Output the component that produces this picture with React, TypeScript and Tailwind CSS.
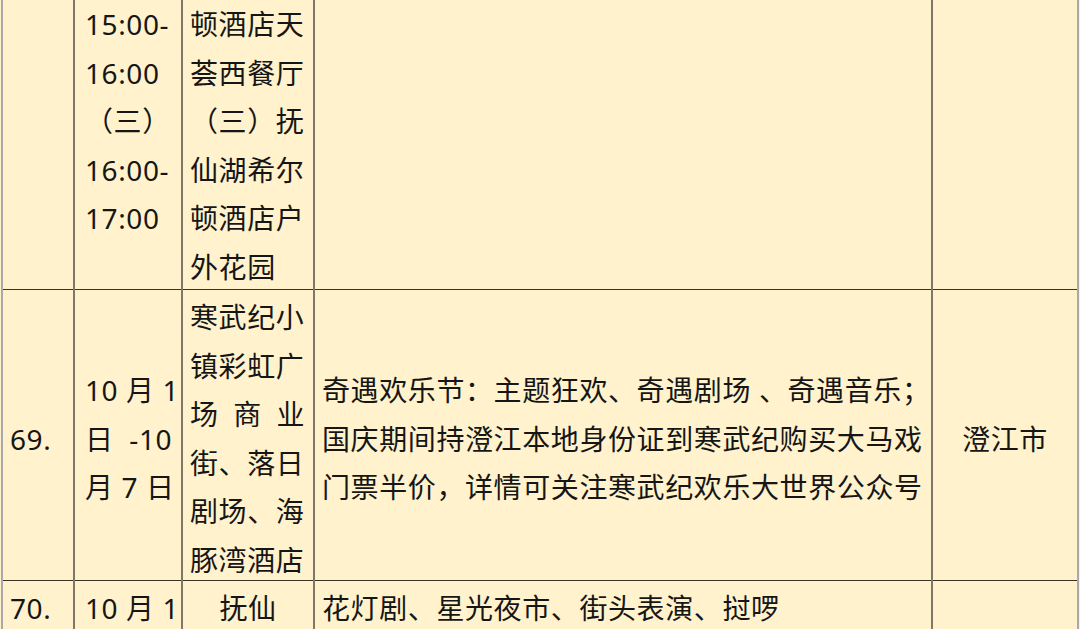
import { FC, ReactNode } from 'react';

const font = { fontFamily: '"Noto Sans", "Noto Sans CJK SC", sans-serif' };

const cols = 'grid grid-cols-[72px_108px_132px_618px_144px]';
const vline = 'border-r-2 border-[#7d7868]';

const Lines: FC<{ lines: ReactNode[]; className?: string }> = ({ lines, className = '' }) => (
	<div className={className}>
		{lines.map((l, i) => (
			<div key={i} className="whitespace-pre">
				{l}
			</div>
		))}
	</div>
);

export default function App() {
	return (
		<div
			className="h-[629px] w-[1080px] overflow-hidden bg-[#FFF2CC] px-px text-[28px] leading-[48.5px] tracking-[0.6px] text-[#161616]"
			style={font}
		>
			<div className="h-full border-x-2 border-[#a9a9a9]">
				{/* row 68 (tail) */}
				<div className={`${cols} h-[290px] border-b border-[#3a3428]`}>
					<div className={vline} />
					<Lines
						className={`${vline} pl-[10px]`}
						lines={['15:00-', '16:00', '（三）', '16:00-', '17:00']}
					/>
					<Lines
						className={`${vline} pl-[7px]`}
						lines={['顿酒店天', '荟西餐厅', '（三）抚', '仙湖希尔', '顿酒店户', '外花园']}
					/>
					<div className={vline} />
					<div />
				</div>

				{/* row 69 */}
				<div className={`${cols} h-[291px] border-b border-[#3a3428]`}>
					<div className={`${vline} flex items-center pl-[7px] pt-[4px]`}>69.</div>
					<div className={`${vline} flex items-center pl-[10px] pt-[4px]`}>
						<Lines lines={['10 月 1', '日  -10', '月 7 日']} />
					</div>
					<div className={`${vline} pl-[7px] pr-[8px] pt-[3px]`}>
						<div>寒武纪小</div>
						<div>镇彩虹广</div>
						<div className="flex justify-between">
							<span>场</span>
							<span>商</span>
							<span>业</span>
						</div>
						<div>街、落日</div>
						<div>剧场、海</div>
						<div>豚湾酒店</div>
					</div>
					<div className={`${vline} flex items-center pl-[7px] pt-[4px]`}>
						<Lines
							lines={[
								'奇遇欢乐节：主题狂欢、奇遇剧场 、奇遇音乐；',
								'国庆期间持澄江本地身份证到寒武纪购买大马戏',
								'门票半价，详情可关注寒武纪欢乐大世界公众号',
							]}
						/>
					</div>
					<div className="flex items-center justify-center pt-[4px]">澄江市</div>
				</div>

				{/* row 70 */}
				<div className={`${cols} h-[300px]`}>
					<div className={`${vline} pl-[7px] pt-[3px]`}>70.</div>
					<div className={`${vline} pl-[10px] pt-[3px] whitespace-pre`}>10 月 1</div>
					<div className={`${vline} pt-[3px] text-center`}>抚仙</div>
					<div className={`${vline} pl-[7px] pt-[3px] whitespace-nowrap`}>
						花灯剧、星光夜市、街头表演、挝啰
					</div>
					<div />
				</div>
			</div>
		</div>
	);
}
